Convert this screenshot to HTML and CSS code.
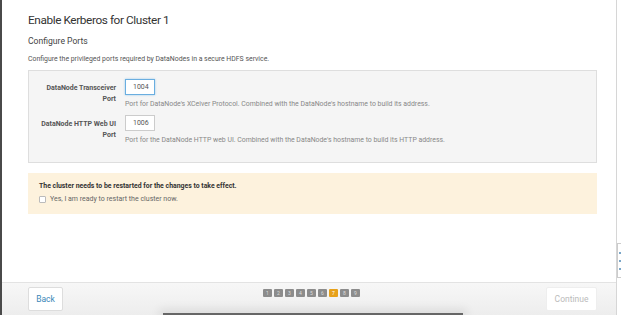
FILE: index.html
```html
<!DOCTYPE html>
<html lang="en">
<head>
  <meta charset="UTF-8">
  <title>Enable Kerberos for Cluster 1</title>
  <link rel="stylesheet" href="styles.css">
</head>
<body>
  <div class="page">
    <div class="content">
      <h1 class="title">Enable Kerberos for Cluster 1</h1>
      <h2 class="subtitle">Configure Ports</h2>
      <p class="intro">Configure the privileged ports required by DataNodes in a secure HDFS service.</p>

      <div class="portsBox">
        <div class="portRow">
          <label class="portLabel" for="transceiverPort">DataNode Transceiver Port</label>
          <div class="portField">
            <input class="portInput focused" id="transceiverPort" type="text" value="1004">
            <div class="portHelp">Port for DataNode's XCeiver Protocol. Combined with the DataNode's hostname to build its address.</div>
          </div>
        </div>
        <div class="portRow">
          <label class="portLabel" for="httpPort">DataNode HTTP Web UI Port</label>
          <div class="portField">
            <input class="portInput" id="httpPort" type="text" value="1006">
            <div class="portHelp">Port for the DataNode HTTP web UI. Combined with the DataNode's hostname to build its HTTP address.</div>
          </div>
        </div>
      </div>

      <div class="restartBox">
        <div class="restartTitle">The cluster needs to be restarted for the changes to take effect.</div>
        <label class="restartCheck"><span class="checkBox"></span>Yes, I am ready to restart the cluster now.</label>
      </div>
    </div>

    <div class="footer">
      <button class="navButton backButton">Back</button>
      <div class="steps">
        <span class="step">1</span><span class="step">2</span><span class="step">3</span><span class="step">4</span><span class="step">5</span><span class="step">6</span><span class="step current">7</span><span class="step">8</span><span class="step">9</span>
      </div>
      <button class="navButton continueButton" disabled>Continue</button>
    </div>
  </div>

  <div class="sideStrip">
    <div class="sideTab"><span></span><span></span><span></span></div>
  </div>
  <div class="bottomBar"></div>
</body>
</html>
```

FILE: styles.css
```css
html, body {
  margin: 0;
  height: 315px;
  overflow: hidden;
  background: #fff;
  font-family: Roboto, "Liberation Sans", sans-serif;
}

body {
  position: relative;
  display: flex;
}

.page {
  flex: 1;
  height: 315px;
  border-left: 2px solid #4a4a4a;
  border-right: 1px solid #d6d6d6;
  display: flex;
  flex-direction: column;
  box-sizing: border-box;
}

.sideStrip {
  width: 4px;
  padding-top: 243px;
}

.content {
  flex: 1;
  padding: 13px 19px 0 26px;
}

.title {
  margin: 0;
  font-size: 11.8px;
  font-weight: 400;
  letter-spacing: -0.4px;
  line-height: 15px;
  color: #333;
}

.subtitle {
  margin: 8px 0 0;
  font-size: 8.6px;
  font-weight: 400;
  line-height: 11px;
  color: #444;
}

.intro {
  margin: 7px 0 0;
  font-size: 6.9px;
  line-height: 10px;
  color: #555;
}

.portsBox {
  margin-top: 6px;
  height: 93px;
  box-sizing: border-box;
  background: #f5f5f5;
  border: 1px solid #dedede;
  padding: 8px 0 0 11px;
}

.portRow {
  display: flex;
  gap: 9px;
  margin-bottom: 6px;
}

.portLabel {
  width: 76px;
  flex-shrink: 0;
  text-align: right;
  font-size: 7px;
  font-weight: 700;
  line-height: 10.5px;
  color: #555;
  padding-top: 4px;
}

.portField {
  display: flex;
  flex-direction: column;
}

.portInput {
  width: 30px;
  height: 16px;
  box-sizing: border-box;
  padding: 0 0 0 7px;
  border: 1px solid #ccc;
  background: #fff;
  font-family: inherit;
  font-size: 7px;
  color: #555;
  outline: none;
}

.portInput.focused {
  border-color: #6aaee0;
  box-shadow: 0 0 2px #9cc9ea;
}

.portHelp {
  margin-top: 4px;
  font-size: 6.9px;
  line-height: 10px;
  color: #888;
}

.restartBox {
  margin-top: 10px;
  height: 41px;
  box-sizing: border-box;
  background: #fdf2dd;
  padding: 8px 11px 0;
}

.restartTitle {
  font-size: 6.9px;
  font-weight: 700;
  line-height: 10px;
  color: #333;
}

.restartCheck {
  display: flex;
  align-items: center;
  gap: 4px;
  margin-top: 3px;
  font-size: 7px;
  line-height: 10px;
  color: #666;
}

.checkBox {
  width: 5px;
  height: 5px;
  border: 1px solid #bbb;
  border-radius: 1px;
  background: #fff;
}

.footer {
  height: 33px;
  box-sizing: border-box;
  border-top: 1px solid #e3e3e3;
  background: linear-gradient(#f7f7f7, #ededed);
  display: flex;
  align-items: flex-start;
  padding: 4px 19px 0 26px;
}

.navButton {
  height: 24px;
  box-sizing: border-box;
  border: 1px solid #ddd;
  border-radius: 2px;
  background: #fff;
  font-family: inherit;
  font-size: 8.5px;
  padding: 0;
}

.backButton {
  width: 35px;
  color: #3a87b8;
}

.continueButton {
  width: 51px;
  color: #bbb;
  border-color: #eee;
}

.steps {
  flex: 1;
  display: flex;
  justify-content: center;
  gap: 2px;
  padding: 2px 0 0 14px;
}

.step {
  width: 9px;
  height: 8px;
  border-radius: 1px;
  background: #8c8c8c;
  color: #ddd;
  font-size: 5px;
  line-height: 8px;
  text-align: center;
}

.step.current {
  background: #e7a11a;
  color: #fff;
}

.sideTab {
  width: 4px;
  height: 33px;
  border: 1px solid #ccc;
  border-right: none;
  background: #fff;
  display: flex;
  flex-direction: column;
  justify-content: center;
  gap: 6px;
  padding-left: 1px;
}

.sideTab span {
  width: 2px;
  height: 2px;
  background: #7aa6c8;
}

.bottomBar {
  position: absolute;
  left: 163px;
  bottom: 0;
  width: 300px;
  height: 2px;
  background: #666;
  box-shadow: 0 0 10px 4px rgba(0, 0, 0, 0.08);
}
```
